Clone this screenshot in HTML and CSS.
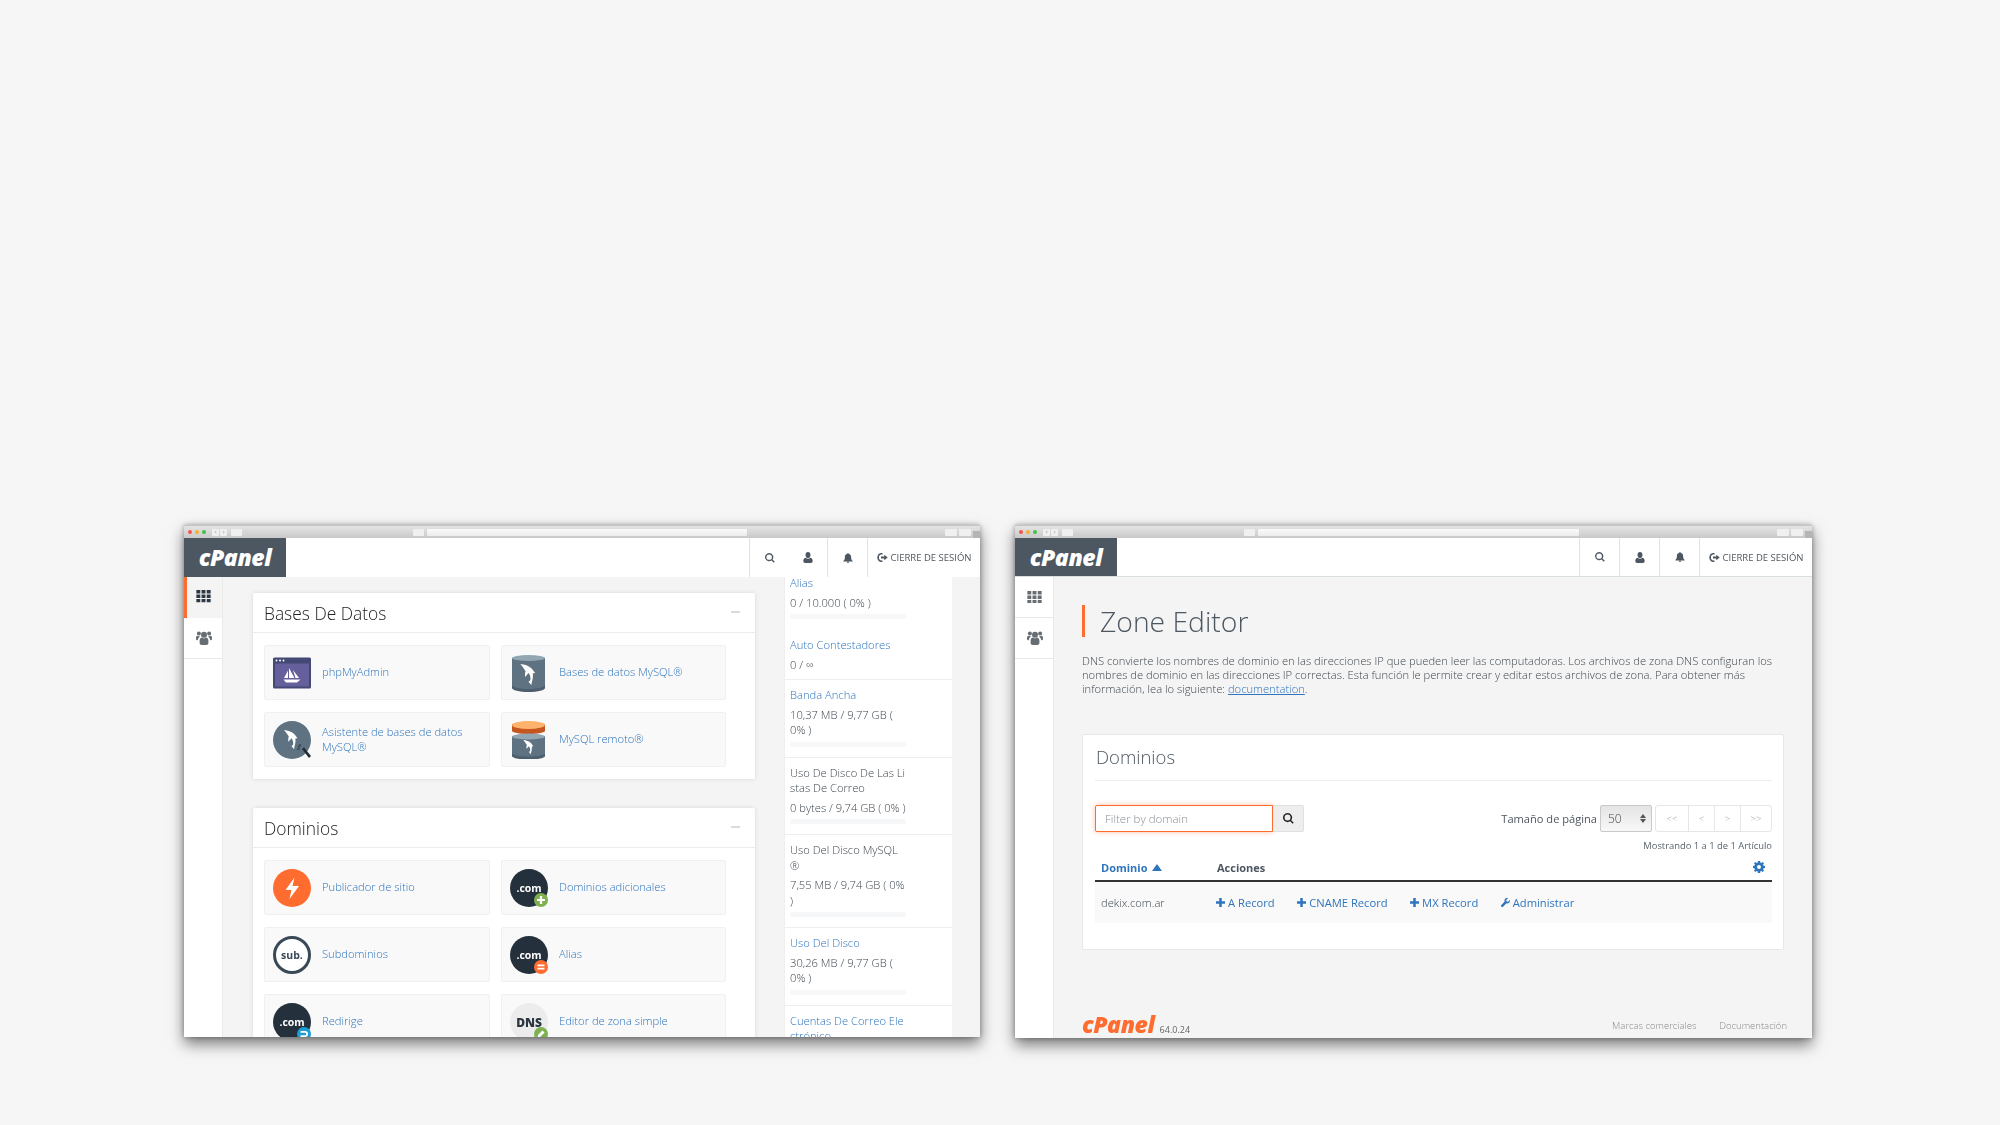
FILE: index.html
```html
<!DOCTYPE html>
<html>

<head>
    <title>cPanel - Zone Editor</title>
    <meta name="viewport" content="width=device-width, initial-scale=1">
    <link rel="stylesheet" href="styles.css">
</head>

<body>
    <svg class="sprite" xmlns="http://www.w3.org/2000/svg">
        <symbol id="i-grid" viewBox="0 0 16 14">
            <path d="M0 0h4.4v3.8H0zM5.8 0h4.4v3.8H5.8zM11.6 0H16v3.8h-4.4zM0 5.1h4.4v3.8H0zM5.8 5.1h4.4v3.8H5.8zM11.6 5.1H16v3.8h-4.4zM0 10.2h4.4V14H0zM5.8 10.2h4.4V14H5.8zM11.6 10.2H16V14h-4.4z" />
        </symbol>
        <symbol id="i-users" viewBox="0 0 16 14">
            <circle cx="8" cy="3.8" r="3" />
            <circle cx="2.9" cy="2.6" r="2" />
            <circle cx="13.1" cy="2.6" r="2" />
            <path d="M3.6 9.5C3.6 7.6 5 6.6 6 6.6c.6.5 1.2.8 2 .8s1.4-.3 2-.8c1 0 2.4 1 2.4 2.9V12c0 1.3-1 2-2.2 2H5.8c-1.2 0-2.2-.7-2.2-2zM0 6.8C0 5.6.6 4.8 1.500 4.7c.4.3.9.5 1.400.5.5 0 .8-.1 1.100-.3-.2.8-.8 1.200-1.500 2.100-.4.6-.6 1.200-.7 2.200H1C.4 9.200 0 8.700 0 8zM16 6.800c0-1.200-.6-2-1.500-2.100-.4.3-.9.5-1.400.5-.5 0-.8-.1-1.100-.3.2.8.8 1.200 1.500 2.100.4.6.6 1.200.7 2.200H15c.6 0 1-.5 1-1.200z" />
        </symbol>
        <symbol id="i-search" viewBox="0 0 14 14">
            <path d="M5.8 0a5.8 5.8 0 0 1 4.7 9.200l3.200 3.200-1.400 1.400-3.200-3.200A5.800 5.800 0 1 1 5.800 0zm0 2a3.800 3.800 0 1 0 0 7.600 3.800 3.800 0 0 0 0-7.600z" />
        </symbol>
        <symbol id="i-user" viewBox="0 0 12 14">
            <path d="M6 0c1.900 0 3.200 1.500 3.200 3.600S8 8 6 8 2.800 5.700 2.800 3.600 4.100 0 6 0zM3.200 7.400C4 8.300 5 8.800 6 8.800s2-.5 2.800-1.400C10.800 7.600 12 9.300 12 11.500c0 1.600-1 2.500-2.400 2.500H2.400C1 14 0 13.100 0 11.500c0-2.200 1.200-3.900 3.200-4.100z" />
        </symbol>
        <symbol id="i-bell" viewBox="0 0 14 14">
            <path d="M7 0c.5 0 .9.4.9.9v.3c2.300.4 3.500 2.300 3.500 4.600 0 3 .9 4.200 2.300 5.300 0 .5-.4.9-.9.9H1.200c-.5 0-.9-.4-.9-.9 1.400-1.100 2.300-2.300 2.300-5.300 0-2.300 1.200-4.200 3.500-4.600V.9C6.100.4 6.500 0 7 0zM5.300 12.400h3.400C8.700 13.300 7.900 14 7 14s-1.700-.7-1.700-1.600z" />
        </symbol>
        <symbol id="i-logout" viewBox="0 0 14 12">
            <path d="M5.500 0H7v2H5.500C3.800 2 2.200 3.600 2.200 6s1.600 4 3.300 4H7v2H5.500C2.500 12 0 9.500 0 6s2.500-6 5.500-6zM9.300 2.300 14 6l-4.700 3.700V7.300H5V4.700h4.300z" />
        </symbol>
        <symbol id="i-plus" viewBox="0 0 10 10">
            <path d="M3.600 0h2.800v3.600H10v2.800H6.400V10H3.600V6.400H0V3.600h3.600z" />
        </symbol>
        <symbol id="i-wrench" viewBox="0 0 12 12">
            <path d="M11.800 2.600c.5 1.600-.1 3.300-1.500 4.200-1 .6-2.100.7-3.100.3L2.800 11.500c-.7.7-1.700.7-2.300 0-.7-.6-.7-1.600 0-2.300l4.400-4.400c-.4-1-.3-2.100.3-3.100C6.100.3 7.800-.3 9.400.2L7 2.600l.5 2 2 .5z" />
        </symbol>
        <symbol id="i-gear" viewBox="0 0 14 14">
            <path fill-rule="evenodd" d="M5.700 0h2.600l.4 1.900 1 .4L11.400 1.200l1.400 1.400-1.100 1.700.4 1 1.900.4v2.600l-1.900.4-.4 1 1.100 1.700-1.400 1.400-1.700-1.100-1 .4-.4 1.900H5.700l-.4-1.900-1-.4-1.700 1.100-1.400-1.400 1.100-1.700-.4-1L0 8.300V5.700l1.900-.4.4-1-1.100-1.700 1.400-1.400 1.700 1.100 1-.4zM7 4.700a2.300 2.300 0 1 0 0 4.600 2.300 2.300 0 0 0 0-4.600z" />
        </symbol>
        <symbol id="i-dolphin" viewBox="0 0 16 23">
            <path d="M0 0C4 .5 9 1.500 12 5l3.500 4.500L13 9.800c.5 3.200 0 6.200-1 9.200l-.5 3-3-3.500 2-1.500c.5-3-.5-6-2-7.500L5 13.500C4.500 11 5 9 5.500 7.500 4 5 2 2.500 0 0z" />
        </symbol>
    </svg>

    <main class="desktop">

        <section class="window">
            <div class="chrome">
                <span class="dot dot-red"></span><span class="dot dot-yellow"></span><span class="dot dot-green"></span>
                <span class="chrome-btn chrome-nav chrome-back">‹</span><span class="chrome-btn chrome-nav">›</span>
                <span class="chrome-btn chrome-side"></span>
                <span class="chrome-btn chrome-share"></span>
                <span class="chrome-url"></span>
                <span class="chrome-btn chrome-end"></span><span class="chrome-btn chrome-end"></span>
                <span class="chrome-tab"></span>
            </div>
            <header class="topbar">
                <div class="logo">cPanel</div>
                <nav class="topnav">
                    <a class="topcell"><svg class="ico ico-search"><use href="#i-search" /></svg></a>
                    <a class="topcell topcell-plain"><svg class="ico ico-user"><use href="#i-user" /></svg></a>
                    <a class="topcell"><svg class="ico ico-bell"><use href="#i-bell" /></svg></a>
                    <a class="topcell topcell-logout"><svg class="ico ico-logout"><use href="#i-logout" /></svg>CIERRE DE SESIÓN</a>
                </nav>
            </header>
            <div class="frame">
                <aside class="sidebar">
                    <a class="side-item side-active"><svg class="ico-grid ico-dark"><use href="#i-grid" /></svg></a>
                    <a class="side-item"><svg class="ico-users"><use href="#i-users" /></svg></a>
                </aside>
                <div class="home">
                    <div class="groups">
                        <section class="group">
                            <h2 class="group-title">Bases De Datos<span class="collapse"></span></h2>
                            <div class="group-items">
                                <a class="tool">
                                    <svg class="tool-ico" viewBox="0 0 38 38">
                                        <rect y="3.5" width="38" height="31" rx="1.5" fill="#434874" />
                                        <rect x="2" y="9.5" width="34" height="23" fill="#655f9c" />
                                        <circle cx="3.5" cy="6.5" r="1" fill="#fff" />
                                        <circle cx="7" cy="6.5" r="1" fill="#fff" />
                                        <circle cx="10.5" cy="6.5" r="1" fill="#fff" />
                                        <path d="M11 24l4-7.5V24zM16 24V14l5.500 10zM22.500 24l-2.500-8 6 8zM10.500 25.500h17L24 28.500H13z" fill="#fff" />
                                    </svg>
                                    <span>phpMyAdmin</span>
                                </a>
                                <a class="tool">
                                    <svg class="tool-ico" viewBox="0 0 38 38">
                                        <path d="M2 4h33v30c0 2-7 4-16.500 4S2 36 2 34z" fill="#4d5f6e" />
                                        <path d="M2 4h33v27c0 2-7 4-16.500 4S2 33 2 31z" fill="#5f7282" />
                                        <ellipse cx="18.5" cy="4" rx="16.5" ry="3" fill="#92a6b4" />
                                        <use href="#i-dolphin" x="10" y="10" width="16" height="22" fill="#fff" />
                                    </svg>
                                    <span>Bases de datos MySQL®</span>
                                </a>
                                <a class="tool">
                                    <svg class="tool-ico" viewBox="0 0 38 38">
                                        <circle cx="19" cy="19" r="19" fill="#5f7282" />
                                        <use href="#i-dolphin" x="11" y="9" width="14" height="20" fill="#fff" />
                                        <path d="M29 28l2-1.500 7 8.500-2 2z" fill="#222c35" />
                                        <path d="M27 23v2.500M24 28h2.500M25 25l1.500 1.500" stroke="#222c35" stroke-width="1" />
                                    </svg>
                                    <span>Asistente de bases de datos<br>MySQL®</span>
                                </a>
                                <a class="tool">
                                    <svg class="tool-ico" viewBox="0 0 38 38">
                                        <path d="M2 3h33v7c0 1.500-7 3-16.500 3S2 11.500 2 10z" fill="#c6561f" />
                                        <ellipse cx="18.5" cy="4" rx="16.5" ry="4" fill="#ffb26b" />
                                        <path d="M2 15h33v20c0 2-7 3.500-16.500 3.500S2 37 2 35z" fill="#4d5f6e" />
                                        <path d="M2 15h33v17c0 2-7 3.500-16.500 3.500S2 34 2 32z" fill="#5f7282" />
                                        <ellipse cx="18.5" cy="15.5" rx="16.5" ry="3" fill="#92a6b4" />
                                        <use href="#i-dolphin" x="13" y="19" width="11" height="15" fill="#fff" />
                                    </svg>
                                    <span>MySQL remoto®</span>
                                </a>
                            </div>
                        </section>

                        <section class="group">
                            <h2 class="group-title">Dominios<span class="collapse"></span></h2>
                            <div class="group-items">
                                <a class="tool">
                                    <svg class="tool-ico" viewBox="0 0 38 38">
                                        <circle cx="19" cy="19" r="19" fill="#ff6c2f" />
                                        <path d="M21.500 8.500 12.500 21h6l-2 9 9.500-13h-6.500z" fill="#fff" />
                                    </svg>
                                    <span>Publicador de sitio</span>
                                </a>
                                <a class="tool">
                                    <svg class="tool-ico" viewBox="0 0 38 38">
                                        <circle cx="19" cy="19" r="19" fill="#24303b" />
                                        <text class="ico-txt" x="19" y="22.5" fill="#fff" text-anchor="middle">.com</text>
                                        <circle cx="31" cy="31" r="7" fill="#7fb04f" />
                                        <use href="#i-plus" x="27" y="27" width="8" height="8" fill="#fff" />
                                    </svg>
                                    <span>Dominios adicionales</span>
                                </a>
                                <a class="tool">
                                    <svg class="tool-ico" viewBox="0 0 38 38">
                                        <circle cx="19" cy="19" r="17.5" fill="#fff" stroke="#3a4957" stroke-width="3" />
                                        <text class="ico-txt" x="19" y="22.5" fill="#3a4957" text-anchor="middle">sub.</text>
                                    </svg>
                                    <span>Subdominios</span>
                                </a>
                                <a class="tool">
                                    <svg class="tool-ico" viewBox="0 0 38 38">
                                        <circle cx="19" cy="19" r="19" fill="#24303b" />
                                        <text class="ico-txt" x="19" y="22.5" fill="#fff" text-anchor="middle">.com</text>
                                        <circle cx="31" cy="31" r="7" fill="#ff6c2f" />
                                        <path d="M27.500 28.500h7v1.800h-7zM27.500 31.800h7v1.800h-7z" fill="#fff" />
                                    </svg>
                                    <span>Alias</span>
                                </a>
                                <a class="tool">
                                    <svg class="tool-ico" viewBox="0 0 38 38">
                                        <circle cx="19" cy="19" r="19" fill="#24303b" />
                                        <text class="ico-txt" x="19" y="22.5" fill="#fff" text-anchor="middle">.com</text>
                                        <circle cx="31" cy="31" r="7" fill="#1f9bd8" />
                                        <path d="M27.500 28h4.500a2.500 2.500 0 0 1 0 6h-4.500v-1.800h4.500a.7.7 0 0 0 0-2.400h-4.500z" fill="#fff" />
                                    </svg>
                                    <span>Redirige</span>
                                </a>
                                <a class="tool">
                                    <svg class="tool-ico" viewBox="0 0 38 38">
                                        <circle cx="19" cy="19" r="19" fill="#ececec" />
                                        <text class="ico-txt ico-txt-dns" x="19" y="23.5" fill="#2b3640" text-anchor="middle">DNS</text>
                                        <circle cx="31" cy="31" r="7" fill="#7fb04f" />
                                        <path d="M27.500 34.500l.7-2.800 4.300-4.300 2.100 2.100-4.300 4.300z" fill="#fff" />
                                    </svg>
                                    <span>Editor de zona simple</span>
                                </a>
                            </div>
                        </section>
                    </div>

                    <aside class="stats">
                        <div class="stat stat-first">
                            <a class="stat-name">Alias</a>
                            <p>0 / 10.000 ( 0% )</p>
                            <div class="bar"></div>
                        </div>
                        <div class="stat stat-nobar">
                            <a class="stat-name">Auto Contestadores</a>
                            <p>0 / ∞</p>
                        </div>
                        <div class="stat">
                            <a class="stat-name">Banda Ancha</a>
                            <p>10,37 MB / 9,77 GB (<br>0% )</p>
                            <div class="bar"></div>
                        </div>
                        <div class="stat">
                            <span class="stat-label">Uso De Disco De Las Li<br>stas De Correo</span>
                            <p>0 bytes / 9,74 GB ( 0% )</p>
                            <div class="bar"></div>
                        </div>
                        <div class="stat">
                            <span class="stat-label">Uso Del Disco MySQL<br>®</span>
                            <p>7,55 MB / 9,74 GB ( 0%<br>)</p>
                            <div class="bar"></div>
                        </div>
                        <div class="stat">
                            <a class="stat-name">Uso Del Disco</a>
                            <p>30,26 MB / 9,77 GB (<br>0% )</p>
                            <div class="bar"></div>
                        </div>
                        <div class="stat">
                            <a class="stat-name">Cuentas De Correo Ele<br>ctrónico</a>
                        </div>
                    </aside>
                </div>
            </div>
        </section>

        <section class="window window-zone">
            <div class="chrome">
                <span class="dot dot-red"></span><span class="dot dot-yellow"></span><span class="dot dot-green"></span>
                <span class="chrome-btn chrome-nav chrome-back">‹</span><span class="chrome-btn chrome-nav">›</span>
                <span class="chrome-btn chrome-side"></span>
                <span class="chrome-btn chrome-share"></span>
                <span class="chrome-url"></span>
                <span class="chrome-btn chrome-end"></span><span class="chrome-btn chrome-end"></span>
                <span class="chrome-tab"></span>
            </div>
            <header class="topbar topbar-line">
                <div class="logo">cPanel</div>
                <nav class="topnav">
                    <a class="topcell"><svg class="ico ico-search"><use href="#i-search" /></svg></a>
                    <a class="topcell"><svg class="ico ico-user"><use href="#i-user" /></svg></a>
                    <a class="topcell"><svg class="ico ico-bell"><use href="#i-bell" /></svg></a>
                    <a class="topcell topcell-logout"><svg class="ico ico-logout"><use href="#i-logout" /></svg>CIERRE DE SESIÓN</a>
                </nav>
            </header>
            <div class="frame">
                <aside class="sidebar">
                    <a class="side-item"><svg class="ico-grid"><use href="#i-grid" /></svg></a>
                    <a class="side-item"><svg class="ico-users"><use href="#i-users" /></svg></a>
                </aside>
                <div class="zone">
                    <h1 class="zone-title">Zone Editor</h1>
                    <p class="zone-desc">
                        DNS convierte los nombres de dominio en las direcciones IP que pueden leer las computadoras. Los archivos de zona DNS configuran los<br>
                        nombres de dominio en las direcciones IP correctas. Esta función le permite crear y editar estos archivos de zona. Para obtener más<br>
                        información, lea lo siguiente: <a href="#">documentation</a>.
                    </p>

                    <section class="card">
                        <h2 class="card-title">Dominios</h2>
                        <div class="toolbar">
                            <div class="filter">
                                <input class="filter-input" type="text" placeholder="Filter by domain">
                                <button class="filter-btn"><svg class="ico-filter"><use href="#i-search" /></svg></button>
                            </div>
                            <div class="pager">
                                <label class="pager-label">Tamaño de página</label>
                                <div class="pager-size">50<span class="spinner"><i class="up"></i><i class="down"></i></span></div>
                                <div class="pager-links">
                                    <span>&lt;&lt;</span><span>&lt;</span><span>&gt;</span><span>&gt;&gt;</span>
                                </div>
                            </div>
                        </div>
                        <div class="showing">Mostrando 1 a 1 de 1 Artículo</div>
                        <div class="table-head">
                            <span class="col-domain"><a>Dominio</a><i class="sort-up"></i></span>
                            <span class="col-actions">Acciones</span>
                            <svg class="ico-gear"><use href="#i-gear" /></svg>
                        </div>
                        <div class="table-row">
                            <span class="col-domain">dekix.com.ar</span>
                            <a class="action action-a"><svg class="ico-plus"><use href="#i-plus" /></svg>A Record</a>
                            <a class="action"><svg class="ico-plus"><use href="#i-plus" /></svg>CNAME Record</a>
                            <a class="action"><svg class="ico-plus"><use href="#i-plus" /></svg>MX Record</a>
                            <a class="action"><svg class="ico-plus"><use href="#i-wrench" /></svg>Administrar</a>
                        </div>
                    </section>

                    <footer class="foot">
                        <span class="foot-logo">cPanel</span>
                        <span class="foot-version">64.0.24</span>
                        <span class="foot-links"><a>Marcas comerciales</a><a>Documentación</a></span>
                    </footer>
                </div>
            </div>
        </section>

    </main>
</body>

</html>
```
FILE: styles.css
```css
* {
    box-sizing: border-box;
    margin: 0;
    padding: 0;
}

body {
    font-family: "Open Sans", "Noto Sans", sans-serif;
    background: #f6f6f6;
    height: 1125px;
    overflow: hidden;
}

.sprite {
    display: none;
}

.desktop {
    display: flex;
    gap: 35px;
    padding: 525px 0 0 184px;
}

.window {
    width: 796px;
    height: 512px;
    display: flex;
    flex-direction: column;
    overflow: hidden;
    background: #f4f4f4;
    box-shadow: 0 7px 14px rgba(0, 0, 0, 0.5), 0 0 5px rgba(0, 0, 0, 0.3);
    filter: blur(0.45px);
}

.window-zone {
    width: 797px;
    height: 513px;
}

/* browser bar */
.chrome {
    flex: none;
    height: 13px;
    display: flex;
    align-items: center;
    padding-left: 4px;
    background: linear-gradient(#e4e4e4, #c9c9c9);
    border-top: 1px solid #c4c4c4;
}

.dot {
    width: 4px;
    height: 4px;
    border-radius: 50%;
    margin-right: 3px;
}

.dot-red {
    background: #f4544e;
}

.dot-yellow {
    background: #f3b02f;
}

.dot-green {
    background: #3fc04b;
}

.chrome-btn {
    height: 7px;
    background: #f0f0f0;
    border-radius: 1px;
}

.chrome-nav {
    width: 7px;
    margin-right: 1px;
    font-size: 7px;
    line-height: 6px;
    text-align: center;
    color: #999;
}

.chrome-back {
    margin-left: 3px;
}

.chrome-side {
    width: 11px;
    margin-left: 3px;
}

.chrome-share {
    width: 11px;
    margin-left: 171px;
}

.chrome-url {
    width: 321px;
    height: 7px;
    margin: 0 198px 0 3px;
    background: linear-gradient(#fafafa, #ececec);
    border-radius: 1px;
}

.chrome-end {
    width: 12px;
    margin-right: 2px;
}

.chrome-tab {
    width: 7px;
    height: 7px;
    margin-top: 5px;
    background: #b5b5b5;
}

/* top bar */
.topbar {
    flex: none;
    height: 39px;
    display: flex;
    justify-content: space-between;
    background: #fff;
}

.topbar-line {
    border-bottom: 1px solid #d9dee1;
}

.logo {
    width: 102px;
    background: #4d5762;
    color: #fff;
    font-size: 23px;
    font-weight: 800;
    font-style: italic;
    line-height: 38px;
    text-align: center;
    letter-spacing: -0.4px;
}

.topnav {
    display: flex;
}

.topcell {
    width: 40px;
    display: flex;
    align-items: center;
    justify-content: center;
    border-left: 1px solid #dde2e5;
}

.topcell-plain {
    border-left: none;
    width: 38px;
}

.topcell-logout {
    width: 113px;
    font-size: 9.5px;
    color: #4f5862;
    gap: 3px;
    white-space: nowrap;
}

.ico {
    fill: #4d5762;
}

.ico-search {
    width: 10px;
    height: 10px;
}

.ico-user {
    width: 10px;
    height: 11px;
}

.ico-bell {
    width: 10px;
    height: 10px;
}

.ico-logout {
    width: 11px;
    height: 9px;
}

/* side nav */
.frame {
    flex: 1;
    min-height: 0;
    display: flex;
}

.sidebar {
    flex: none;
    width: 39px;
    background: #fff;
    border-right: 1px solid #eaeaea;
}

.side-item {
    height: 41px;
    display: flex;
    align-items: center;
    justify-content: center;
    padding-left: 1px;
    border-bottom: 1px solid #e6e9eb;
}

.side-active {
    background: #f4f4f4;
    border-bottom: none;
    border-left: 3px solid #ff6c2f;
    padding: 0 2px 2px 0;
}

.ico-grid {
    width: 15px;
    height: 12.5px;
    fill: #666d73;
}

.ico-users {
    width: 16px;
    height: 14px;
    fill: #666d73;
}

.ico-dark {
    fill: #2d3a46;
}

/* home page */
.home {
    flex: 1;
    min-width: 0;
    display: flex;
    gap: 29px;
    padding-left: 30px;
}

.groups {
    flex: none;
    width: 502px;
    padding-top: 16px;
}

.group {
    background: #fff;
    border-radius: 2px;
    box-shadow: 0 0 4px rgba(0, 0, 0, 0.12);
    margin-bottom: 29px;
}

.group-title {
    height: 40px;
    display: flex;
    align-items: center;
    justify-content: space-between;
    padding: 0 15px 0 11px;
    font-size: 17.4px;
    font-weight: 300;
    color: #222;
    border-bottom: 1px solid #ececec;
}

.collapse {
    width: 9px;
    height: 2px;
    margin-top: -1px;
    background: #d5dde0;
}

.group-items {
    display: grid;
    grid-template-columns: 226px 225px;
    grid-auto-rows: 55px;
    gap: 12px 11px;
    padding: 12px 11px;
}

.tool {
    display: flex;
    align-items: center;
    gap: 11px;
    padding-left: 8px;
    background: #f9f9f9;
    border: 1px solid #f0f0f0;
    border-radius: 2px;
    font-size: 11.2px;
    line-height: 14.5px;
    font-weight: 300;
    color: #2f75bd;
}

.tool-ico {
    flex: none;
    width: 38px;
    height: 38px;
}

.ico-txt {
    font-family: "Open Sans", sans-serif;
    font-size: 10.5px;
    font-weight: 700;
}

.ico-txt-dns {
    font-size: 12px;
    font-weight: 800;
}

/* usage column */
.stats {
    flex: none;
    width: 168px;
    background: #fff;
    border-left: 1px solid #efefef;
}

.stat {
    padding: 7px 0 10px 5px;
    font-size: 11.2px;
    line-height: 15.5px;
    font-weight: 300;
    color: #3f4851;
    white-space: nowrap;
    border-bottom: 1px solid #eceff1;
}

.stat p {
    margin-top: 4px;
}

.stat-first {
    height: 55px;
    margin-top: -2px;
    padding-top: 0;
    border-bottom: none;
}

.stat-nobar {
    padding-bottom: 7px;
}

.stat-name {
    color: #2f75bd;
}

.stat-label {
    display: block;
}

.bar {
    width: 116px;
    height: 5px;
    margin-top: 4px;
    background: #f5f7f8;
    border-radius: 3px;
}

/* zone editor page */
.zone {
    flex: 1;
    min-width: 0;
    padding: 28px 28px 0;
}

.zone-title {
    border-left: 3px solid #ff6c2f;
    padding-left: 15px;
    font-size: 28.3px;
    line-height: 32px;
    font-weight: 300;
    color: #4d5761;
}

.zone-desc {
    margin-top: 17px;
    font-size: 11.2px;
    line-height: 14px;
    font-weight: 300;
    color: #3f4851;
    white-space: nowrap;
}

.zone-desc a {
    color: #2f75bd;
}

.card {
    margin-top: 38px;
    height: 216px;
    padding: 0 11px 0 12px;
    background: #fff;
    border: 1px solid #e4e8e9;
    border-radius: 2px;
}

.card-title {
    height: 46px;
    padding-left: 1px;
    font-size: 18.5px;
    line-height: 44px;
    font-weight: 300;
    color: #4d5761;
    border-bottom: 1px solid #eee;
}

.toolbar {
    margin-top: 24px;
    height: 27px;
    display: flex;
    justify-content: space-between;
}

.filter {
    display: flex;
}

.filter-input {
    width: 178px;
    height: 27px;
    padding-left: 9px;
    font-family: inherit;
    font-size: 11.5px;
    font-weight: 300;
    border: 1px solid #ff6c2f;
    border-radius: 2px 0 0 2px;
    box-shadow: 0 0 5px rgba(255, 108, 47, 0.45);
    outline: none;
}

.filter-input::placeholder {
    color: #8a8f94;
}

.filter-btn {
    width: 31px;
    display: flex;
    align-items: center;
    justify-content: center;
    background: #eee;
    border: 1px solid #e0e0e0;
    border-left: none;
    border-radius: 0 2px 2px 0;
}

.ico-filter {
    width: 11px;
    height: 11px;
    fill: #222;
}

.pager {
    display: flex;
    align-items: center;
}

.pager-label {
    margin-right: 3px;
    font-size: 11.1px;
    color: #4d5660;
}

.pager-size {
    width: 52px;
    height: 27px;
    display: flex;
    align-items: center;
    justify-content: space-between;
    padding: 0 5px 0 7px;
    font-size: 12px;
    font-weight: 300;
    color: #444;
    background: linear-gradient(#e4e4e4, #f8f8f8);
    border: 1px solid #c9c9c9;
    border-radius: 2px;
}

.spinner {
    display: flex;
    flex-direction: column;
    gap: 1px;
}

.spinner i {
    display: block;
    border-left: 3px solid transparent;
    border-right: 3px solid transparent;
}

.spinner .up {
    border-bottom: 4px solid #555;
}

.spinner .down {
    border-top: 4px solid #555;
}

.pager-links {
    display: grid;
    grid-template-columns: 32px 26px 26px 31px;
    height: 27px;
    margin-left: 3px;
    border: 1px solid #e6e6e6;
    border-radius: 3px;
}

.pager-links span {
    display: flex;
    align-items: center;
    justify-content: center;
    font-size: 9.5px;
    font-weight: 300;
    color: #9a9a9a;
    border-left: 1px solid #e6e6e6;
}

.pager-links span:first-child {
    border-left: none;
}

.showing {
    margin-top: 7px;
    height: 13px;
    font-size: 9.4px;
    line-height: 13px;
    color: #59636d;
    text-align: right;
}

.table-head {
    margin-top: 6px;
    height: 24px;
    padding-bottom: 4px;
    display: flex;
    align-items: center;
    border-bottom: 2px solid #333;
    font-size: 11px;
    font-weight: 700;
    color: #4d5660;
}

.col-domain {
    width: 122px;
    padding-left: 6px;
    display: flex;
    align-items: center;
}

.col-domain a {
    color: #2f75bd;
}

.sort-up {
    margin-left: 4px;
    border-left: 5px solid transparent;
    border-right: 5px solid transparent;
    border-bottom: 7px solid #2f75bd;
}

.col-actions {
    flex: 1;
}

.ico-gear {
    width: 12px;
    height: 12px;
    margin-right: 7px;
    fill: #2f75bd;
}

.table-row {
    height: 41px;
    display: flex;
    align-items: center;
    gap: 22.5px;
    background: #f9f9f9;
    font-size: 11.2px;
}

.table-row .col-domain {
    margin-right: -22.5px;
    font-weight: 300;
    color: #3f4851;
}

.action {
    display: flex;
    align-items: center;
    gap: 3px;
    color: #2f75bd;
    white-space: nowrap;
}

.action-a {
    margin-left: -1px;
}

.ico-plus {
    width: 9px;
    height: 9px;
    fill: #2f75bd;
}

.foot {
    margin-top: 62px;
    display: flex;
    align-items: flex-end;
}

.foot-logo {
    font-size: 23px;
    line-height: 24px;
    font-weight: 800;
    font-style: italic;
    letter-spacing: -0.4px;
    color: #ff6c2f;
}

.foot-version {
    margin-left: 5px;
    font-size: 9px;
    line-height: 12px;
    color: #666;
}

.foot-links {
    margin-left: auto;
    margin-right: -3px;
    display: flex;
    gap: 23px;
    font-size: 9.5px;
    line-height: 20px;
    font-weight: 300;
    color: #8b8b8b;
}
```
